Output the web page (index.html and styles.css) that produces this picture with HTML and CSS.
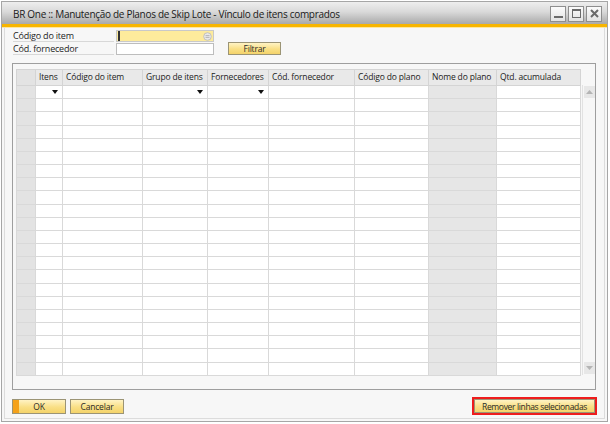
FILE: index.html
```html
<!DOCTYPE html>
<html lang="pt-BR">
<head>
<meta charset="utf-8">
<title>Vínculo de itens comprados</title>
<link rel="stylesheet" href="styles.css">
</head>
<body>
<div class="window">
  <div class="titlebar">
    <span class="title">BR One :: Manutenção de Planos de Skip Lote - Vínculo de itens comprados</span>
    <div class="wbtns">
      <span class="wbtn"><svg width="11" height="11" viewBox="0 0 11 11"><rect x="1" y="8" width="9" height="2" fill="#6a6a6a"/></svg></span>
      <span class="wbtn"><svg width="11" height="11" viewBox="0 0 11 11"><rect x="1.5" y="1.5" width="8" height="8" fill="none" stroke="#6a6a6a" stroke-width="1"/><rect x="1" y="1" width="9" height="2" fill="#6a6a6a"/></svg></span>
      <span class="wbtn"><svg width="11" height="11" viewBox="0 0 11 11"><path d="M2 2 L9 9 M9 2 L2 9" stroke="#6a6a6a" stroke-width="2"/></svg></span>
    </div>
  </div>
  <div class="content">
    <div class="form">
      <div class="frow">
        <span class="lbl">Código do item</span>
        <div class="field yellow"><span class="caret"></span><svg class="cfl" width="9" height="9" viewBox="0 0 9 9"><circle cx="4.5" cy="4.5" r="3.8" fill="#e9e9e9" stroke="#b8b8b8" stroke-width="0.8"/><path d="M2.5 3.6 H6.5 M2.5 5.4 H6.5" stroke="#a8a8a8" stroke-width="0.8"/></svg></div>
      </div>
      <div class="frow">
        <span class="lbl">Cód. fornecedor</span>
        <div class="field"></div>
        <button class="btn filtrar">Filtrar</button>
      </div>
    </div>
    <div class="panel">
      <table class="grid">
        <colgroup>
          <col class="c-num"><col class="c-itens"><col class="c-cod"><col class="c-grp"><col class="c-forn"><col class="c-cforn"><col class="c-plano"><col class="c-nome"><col class="c-qtd">
        </colgroup>
        <thead>
          <tr><th></th><th>Itens</th><th>Código do item</th><th>Grupo de itens</th><th>Fornecedores</th><th>Cód. fornecedor</th><th>Código do plano</th><th>Nome do plano</th><th>Qtd. acumulada</th></tr>
        </thead>
        <tbody>
          <tr><td></td><td class="dd"><span class="tri"></span></td><td></td><td class="dd"><span class="tri"></span></td><td class="dd"><span class="tri"></span></td><td></td><td></td><td class="ro"></td><td></td></tr>
          <tr><td></td><td></td><td></td><td></td><td></td><td></td><td></td><td class="ro"></td><td></td></tr>
          <tr><td></td><td></td><td></td><td></td><td></td><td></td><td></td><td class="ro"></td><td></td></tr>
          <tr><td></td><td></td><td></td><td></td><td></td><td></td><td></td><td class="ro"></td><td></td></tr>
          <tr><td></td><td></td><td></td><td></td><td></td><td></td><td></td><td class="ro"></td><td></td></tr>
          <tr><td></td><td></td><td></td><td></td><td></td><td></td><td></td><td class="ro"></td><td></td></tr>
          <tr><td></td><td></td><td></td><td></td><td></td><td></td><td></td><td class="ro"></td><td></td></tr>
          <tr><td></td><td></td><td></td><td></td><td></td><td></td><td></td><td class="ro"></td><td></td></tr>
          <tr><td></td><td></td><td></td><td></td><td></td><td></td><td></td><td class="ro"></td><td></td></tr>
          <tr><td></td><td></td><td></td><td></td><td></td><td></td><td></td><td class="ro"></td><td></td></tr>
          <tr><td></td><td></td><td></td><td></td><td></td><td></td><td></td><td class="ro"></td><td></td></tr>
          <tr><td></td><td></td><td></td><td></td><td></td><td></td><td></td><td class="ro"></td><td></td></tr>
          <tr><td></td><td></td><td></td><td></td><td></td><td></td><td></td><td class="ro"></td><td></td></tr>
          <tr><td></td><td></td><td></td><td></td><td></td><td></td><td></td><td class="ro"></td><td></td></tr>
          <tr><td></td><td></td><td></td><td></td><td></td><td></td><td></td><td class="ro"></td><td></td></tr>
          <tr><td></td><td></td><td></td><td></td><td></td><td></td><td></td><td class="ro"></td><td></td></tr>
          <tr><td></td><td></td><td></td><td></td><td></td><td></td><td></td><td class="ro"></td><td></td></tr>
          <tr><td></td><td></td><td></td><td></td><td></td><td></td><td></td><td class="ro"></td><td></td></tr>
          <tr><td></td><td></td><td></td><td></td><td></td><td></td><td></td><td class="ro"></td><td></td></tr>
          <tr><td></td><td></td><td></td><td></td><td></td><td></td><td></td><td class="ro"></td><td></td></tr>
          <tr><td></td><td></td><td></td><td></td><td></td><td></td><td></td><td class="ro"></td><td></td></tr>
          <tr><td></td><td></td><td></td><td></td><td></td><td></td><td></td><td class="ro"></td><td></td></tr>
        </tbody>
      </table>
      <div class="vscroll">
        <span class="sarrow"><svg width="7" height="4" viewBox="0 0 7 4"><path d="M0 4 L3.5 0 L7 4 Z" fill="#b4b4b4"/></svg></span>
        <span class="sarrow"><svg width="7" height="4" viewBox="0 0 7 4"><path d="M0 0 L3.5 4 L7 0 Z" fill="#b4b4b4"/></svg></span>
      </div>
    </div>
    <div class="actions">
      <button class="btn ok">OK</button>
      <button class="btn">Cancelar</button>
      <div class="highlight"><button class="btn remove">Remover linhas selecionadas</button></div>
    </div>
  </div>
</div>
</body>
</html>
```

FILE: styles.css
```css
* { box-sizing: border-box; }
html, body { margin: 0; padding: 0; background: #ffffff; }
body { font-family: "Open Sans", "Noto Sans", sans-serif; color: #222; }

.window {
  margin: 1px;
  width: 607px;
  height: 421px;
  border: 1px solid #a6a6a6;
  background: #f7f7f7;
  display: flex;
  flex-direction: column;
}

.titlebar {
  height: 25px;
  flex: none;
  display: flex;
  align-items: center;
  justify-content: space-between;
  padding: 0 5px 0 11px;
  background: linear-gradient(#eeeeee, #d9d9d9 45%, #a9a9a9);
  border-bottom: 3px solid #f7b500;
  box-shadow: 0 1px 0 #fde7a0;
}
.title { font-size: 10px; color: #1a1a1a; letter-spacing: -0.3px; margin-top: 1px; }
.wbtns { display: flex; gap: 2px; margin-top: 1px; }
.wbtn {
  width: 16px; height: 16px;
  border: 1px solid #8e8e8e;
  background: linear-gradient(#fbfbfb, #e2e2e2);
  display: flex; align-items: center; justify-content: center;
}

.content {
  flex: 1;
  margin: 0 2px 2px;
  border: 1px solid #dcdcdc;
  border-top: 0;
  padding: 3px 8px 0 7px;
  display: flex;
  flex-direction: column;
}

.form { display: flex; flex-direction: column; gap: 1px; padding-left: 1px; }
.frow { display: flex; align-items: flex-end; height: 12px; }
.lbl {
  width: 101px;
  height: 12px;
  font-size: 9px;
  line-height: 11px;
  letter-spacing: -0.2px;
  color: #1e1e1e;
  border-bottom: 1px solid #d8d8d8;
  margin-right: 2px;
}
.field {
  width: 98px; height: 12px;
  border: 1px solid #bdbdbd;
  background: #fff;
  display: flex; align-items: center; justify-content: space-between;
}
.field.yellow { background: #fdeb9c; border-color: #c9c9c9; }
.caret { width: 2px; height: 10px; background: #333; margin-left: 1px; }
.cfl { margin-right: 1px; }

.btn {
  font-family: inherit;
  font-size: 8.5px;
  letter-spacing: -0.2px;
  color: #2a2a2a;
  padding: 0;
  border: 1px solid #9b9475;
  background: linear-gradient(#fff3c4, #f9df85 55%, #f4d36a);
  line-height: 11px;
  white-space: nowrap;
}
.filtrar { width: 53px; height: 13px; margin-left: 14px; }

.panel {
  margin-top: 8px;
  height: 327px;
  border: 1px solid #9e9e9e;
  padding: 5px 3px 0 3px;
  display: flex;
  align-items: flex-start;
}

.grid {
  border-collapse: collapse;
  table-layout: fixed;
  width: 564px;
  background: #fff;
}
.c-num { width: 19px; }
.c-itens { width: 27px; }
.c-cod { width: 80px; }
.c-grp { width: 65px; }
.c-forn { width: 61px; }
.c-cforn { width: 86px; }
.c-plano { width: 74px; }
.c-nome { width: 68px; }
.c-qtd { width: 84px; }

.grid thead tr { height: 16px; }
.grid th {
  background: #e9e9e9;
  border: 1px solid #d4d4d4;
  font-weight: normal;
  font-size: 8.5px;
  letter-spacing: -0.15px;
  line-height: 10px;
  text-align: left;
  padding: 0 0 2px 3px;
  color: #222;
  white-space: nowrap;
  overflow: hidden;
}
.grid tbody tr { height: 13.18px; }
.grid td {
  padding: 0;
  font-size: 0;
  line-height: 0;
  border: 1px solid #d9d9d9;
}
.grid td:first-child, .grid th:first-child { background: #e3e3e3; }
.grid td.ro { background: #e6e6e6; }
.grid td.dd { text-align: right; padding-right: 4px; }
.tri {
  display: inline-block;
  width: 0; height: 0;
  border-left: 3.5px solid transparent;
  border-right: 3.5px solid transparent;
  border-top: 4px solid #111;
  vertical-align: middle;
}

.vscroll {
  margin-top: 16px;
  margin-left: 1px;
  width: 13px;
  height: 290px;
  border-left: 1px solid #e2e2e2;
  background: #f7f7f7;
  display: flex;
  flex-direction: column;
  justify-content: space-between;
  padding: 1px 0 1px 1px;
}
.sarrow {
  width: 11px; height: 12px;
  background: #e7e7e7;
  display: flex; align-items: center; justify-content: center;
}

.actions {
  margin-top: 7px;
  display: flex;
  align-items: center;
  gap: 4px;
}
.actions .btn { width: 54px; height: 15px; }
.ok {
  background: linear-gradient(90deg, #f5a21a 0, #f5a21a 6px, transparent 6px), linear-gradient(#fff3c4, #f9df85 55%, #f4d36a);
}
.highlight {
  margin-left: auto;
  border: 2px solid #ee1c1c;
  padding: 0;
  margin-right: -1px;
}
.actions .remove { width: 121px; height: 14px; display: block; letter-spacing: -0.35px; }
```
